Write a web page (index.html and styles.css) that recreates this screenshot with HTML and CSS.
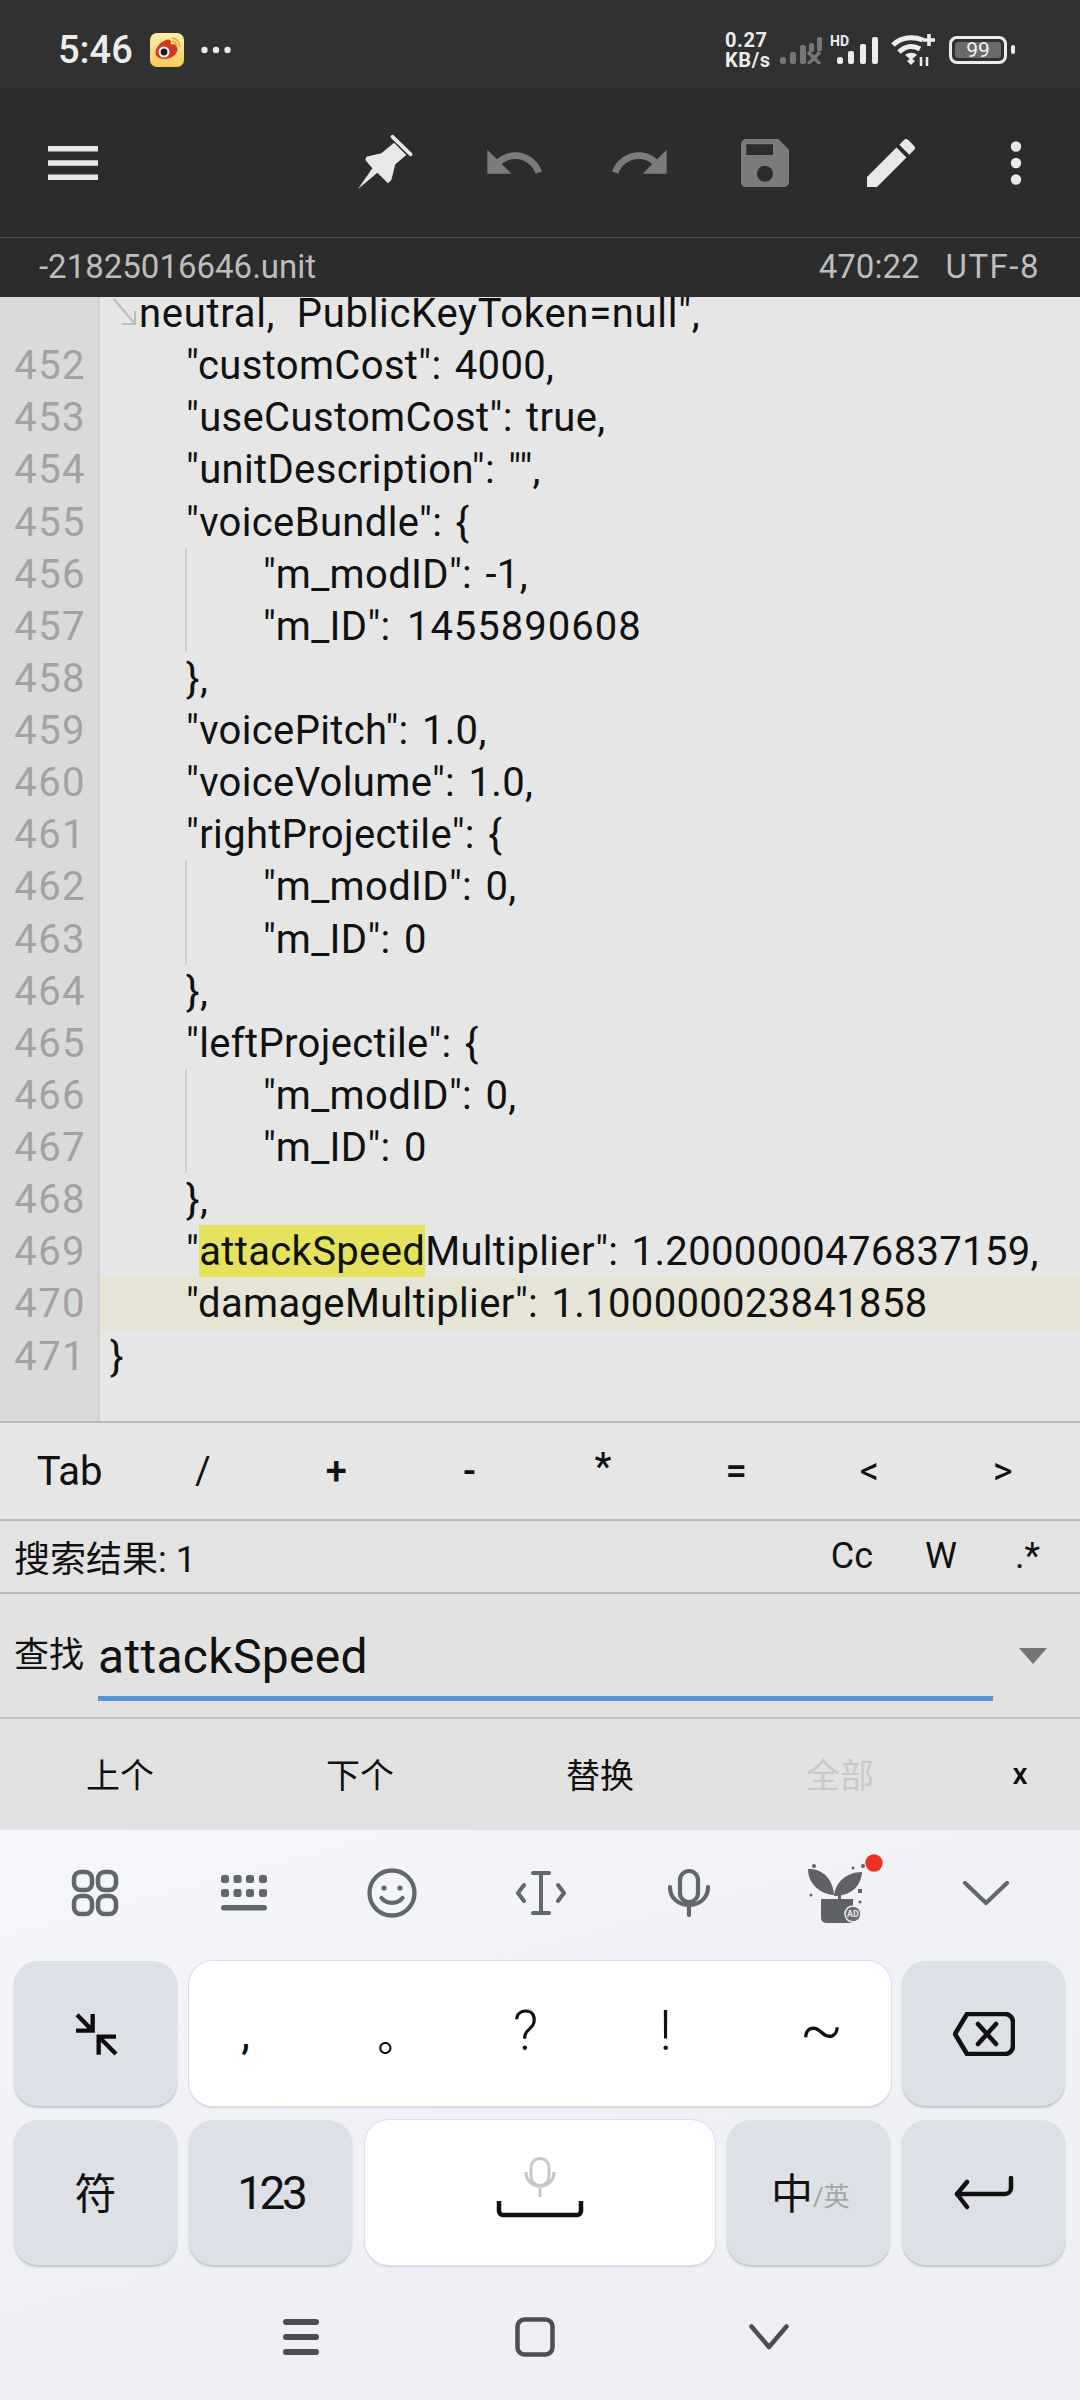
FILE: index.html
```html
<!DOCTYPE html>
<html lang="zh">
<head>
<meta charset="utf-8">
<title>Editor</title>
<link rel="stylesheet" href="styles.css">
</head>
<body>
<div class="phone">
  <header class="status">
    <div class="status-left">
      <span class="time">5:46</span>
      <svg class="weibo" width="34" height="34" viewBox="0 0 34 34">
        <defs><linearGradient id="wb" x1="0" y1="0" x2="0" y2="1"><stop offset="0" stop-color="#fdeeb0"/><stop offset="1" stop-color="#f5cc58"/></linearGradient></defs>
        <rect width="34" height="34" rx="7" fill="url(#wb)"/>
        <path d="M5.500 20c0-6 6-12 12-13.500 3.500-.8 4 2.500 3 5 4-1 7 0 7 4 0 6-6 10.500-13 10.500-5.500 0-9-3-9-6z" fill="#d5361c"/>
        <circle cx="14" cy="19" r="5.500" fill="#fff"/>
        <circle cx="14" cy="19" r="3.400" fill="#1b1b1b"/>
        <path d="M22 8a5 5 0 0 1 4.500 6M22 5a8 8 0 0 1 7.500 8.500" fill="none" stroke="#eda23a" stroke-width="1.500"/>
      </svg>
      <svg class="dots" width="30" height="8" viewBox="0 0 30 8"><circle cx="3.500" cy="4" r="3.200"/><circle cx="15" cy="4" r="3.200"/><circle cx="26.500" cy="4" r="3.200"/></svg>
    </div>
    <div class="status-right">
      <div class="speed"><span>0.27</span><span>KB/s</span></div>
      <svg class="sig1" width="42" height="27" viewBox="0 0 42 27">
        <g fill="#767676"><rect x="0" y="20" width="6" height="7" rx="2.500"/><rect x="10" y="15" width="6" height="12" rx="2"/><rect x="20" y="8" width="6" height="19" rx="2"/><rect x="29" y="6" width="5" height="9" rx="1.500"/><rect x="37" y="0" width="5" height="14" rx="1.500"/></g>
        <path d="M28 15l12 12M40 15L28 27" stroke="#767676" stroke-width="3.500"/>
      </svg>
      <div class="sig2">
        <span class="hd">HD</span>
        <svg width="41" height="27" viewBox="0 0 41 27"><g fill="#ececec"><rect x="0" y="20" width="6" height="7" rx="2.500"/><rect x="11" y="14" width="6" height="13" rx="2"/><rect x="23" y="7" width="6" height="20" rx="2"/><rect x="35" y="0" width="6" height="27" rx="2"/></g></svg>
      </div>
      <svg class="wifi" width="46" height="34" viewBox="0 0 46 34">
        <g fill="none" stroke="#ececec" stroke-width="5"><path d="M2 12C10 4 22 3 32 7"/><path d="M8 19c6-6 14-7 21-3"/></g>
        <path d="M14 23c4-3 9-3 12 0l-6 5z" fill="#ececec" transform="translate(0 -1)"/>
        <path d="M16 28l4-3 4 3-4 4z" fill="#ececec"/>
        <path d="M38 1v12M32 7h12" stroke="#ececec" stroke-width="3.600"/>
        <path d="M30 24v9M36 24v9" stroke="#ececec" stroke-width="2.600"/>
      </svg>
      <div class="battery"><div class="cell"><span>99</span></div><i class="nub"></i></div>
    </div>
  </header>

  <div class="toolbar">
    <div class="tb-cell">
      <svg width="50" height="34" viewBox="0 0 50 34"><path d="M0 0h50v5.500H0zM0 14.200h50v5.500H0zM0 28.500h50V34H0z" fill="#e8e8e8"/></svg>
    </div>
    <div class="tb-group">
      <div class="tb-cell">
        <svg class="pin" width="100" height="75" viewBox="0 0 300 225" fill="#e8e8e8">
          <path d="M163 35l55 53" stroke="#e8e8e8" stroke-width="11" stroke-linecap="round"/>
          <path d="M168 53l37 37-33 28-12 47-10 10-32-32-58 49 43-62-21-25 3-10 45-10z"/>
        </svg>
      </div>
      <div class="tb-cell"><svg width="64" height="64" viewBox="0 0 24 24" fill="#7b7b7b"><path d="M12.500 8c-2.650 0-5.050.99-6.900 2.600L2 7v9h9l-3.620-3.620c1.390-1.160 3.160-1.880 5.120-1.880 3.540 0 6.550 2.310 7.600 5.500l2.370-.78C21.080 11.030 17.150 8 12.500 8z"/></svg></div>
      <div class="tb-cell"><svg width="64" height="64" viewBox="0 0 24 24" fill="#7b7b7b"><path d="M18.400 10.600C16.550 8.990 14.150 8 11.500 8c-4.650 0-8.580 3.030-9.960 7.220L3.900 16c1.050-3.190 4.050-5.500 7.600-5.500 1.950 0 3.730.72 5.120 1.880L13 16h9V7l-3.600 3.600z"/></svg></div>
      <div class="tb-cell"><svg width="64" height="64" viewBox="0 0 24 24" fill="#7b7b7b"><path d="M17 3H5c-1.110 0-2 .9-2 2v14c0 1.100.89 2 2 2h14c1.100 0 2-.9 2-2V7l-4-4zm-5 16c-1.660 0-3-1.340-3-3s1.340-3 3-3 3 1.340 3 3-1.340 3-3 3zm3-10H5V5h10v4z"/></svg></div>
      <div class="tb-cell"><svg width="64" height="64" viewBox="0 0 24 24" fill="#e8e8e8"><path d="M3 17.250V21h3.750L17.810 9.940l-3.750-3.750L3 17.250zM20.710 7.040c.39-.39.39-1.020 0-1.410l-2.340-2.340c-.39-.39-1.020-.39-1.410 0l-1.830 1.830 3.750 3.750 1.830-1.830z"/></svg></div>
      <div class="tb-cell"><svg width="12" height="44" viewBox="0 0 12 44" fill="#e8e8e8"><circle cx="6" cy="5.500" r="5.200"/><circle cx="6" cy="22" r="5.200"/><circle cx="6" cy="38.500" r="5.200"/></svg></div>
    </div>
  </div>

  <div class="filebar">
    <span>-21825016646.unit</span>
    <span class="fileinfo"><span>470:22</span><span class="encoding">UTF-8</span></span>
  </div>

  <main class="editor">
    <div class="lines">
      <div class="row"><div class="num"></div><div class="code wrap"><svg class="wrap-arrow" width="26" height="30" viewBox="0 0 26 30"><path d="M2 2l21 25M23 14v13H10" fill="none" stroke="#bdbdbd" stroke-width="2"/></svg>neutral, PublicKeyToken=null",</div></div>
      <div class="row"><div class="num">452</div><div class="code i1">"customCost": 4000,</div></div>
      <div class="row"><div class="num">453</div><div class="code i1">"useCustomCost": true,</div></div>
      <div class="row"><div class="num">454</div><div class="code i1">"unitDescription": "",</div></div>
      <div class="row"><div class="num">455</div><div class="code i1">"voiceBundle": {</div></div>
      <div class="row"><div class="num">456</div><div class="code i2">"m_modID": -1,</div></div>
      <div class="row"><div class="num">457</div><div class="code i2">"m_ID": <span class="digits">1455890608</span></div></div>
      <div class="row"><div class="num">458</div><div class="code i1">},</div></div>
      <div class="row"><div class="num">459</div><div class="code i1">"voicePitch": 1.0,</div></div>
      <div class="row"><div class="num">460</div><div class="code i1">"voiceVolume": 1.0,</div></div>
      <div class="row"><div class="num">461</div><div class="code i1">"rightProjectile": {</div></div>
      <div class="row"><div class="num">462</div><div class="code i2">"m_modID": 0,</div></div>
      <div class="row"><div class="num">463</div><div class="code i2">"m_ID": 0</div></div>
      <div class="row"><div class="num">464</div><div class="code i1">},</div></div>
      <div class="row"><div class="num">465</div><div class="code i1">"leftProjectile": {</div></div>
      <div class="row"><div class="num">466</div><div class="code i2">"m_modID": 0,</div></div>
      <div class="row"><div class="num">467</div><div class="code i2">"m_ID": 0</div></div>
      <div class="row"><div class="num">468</div><div class="code i1">},</div></div>
      <div class="row"><div class="num">469</div><div class="code i1">"<span class="match">attackSpeed</span>Multiplier": 1.2000000476837159,</div></div>
      <div class="row current"><div class="num">470</div><div class="code i1">"damageMultiplier": 1.100000023841858</div></div>
      <div class="row"><div class="num">471</div><div class="code i0">}</div></div>
      <div class="row fill"><div class="num"></div><div class="code"></div></div>
    </div>
  </main>

  <div class="symbols">
    <span class="tab">Tab</span><span>/</span><span class="b">+</span><span class="b">-</span><span class="b star">*</span><span class="b">=</span><span>&lt;</span><span>&gt;</span>
  </div>

  <div class="results">
    <span class="count">搜索结果: 1</span>
    <span class="opts"><span>Cc</span><span>W</span><span class="regex">.*</span></span>
  </div>

  <div class="find">
    <span class="find-label">查找</span>
    <div class="find-input">attackSpeed</div>
    <i class="caret"></i>
  </div>

  <div class="actions">
    <span>上个</span><span>下个</span><span>替换</span><span class="off">全部</span><span class="close">x</span>
  </div>

  <section class="keyboard">
    <div class="kb-tools">
      <div class="kb-tool"><svg width="48" height="48" viewBox="0 0 48 48" fill="none" stroke="#63666c" stroke-width="4.500"><rect x="3" y="3" width="18" height="18" rx="6.500"/><rect x="27" y="3" width="18" height="18" rx="6.500"/><rect x="3" y="27" width="18" height="18" rx="6.500"/><rect x="27" y="27" width="18" height="18" rx="6.500"/></svg></div>
      <div class="kb-tool"><svg width="46" height="36" viewBox="0 0 46 36" fill="#63666c"><rect x="0" y="0" width="8" height="8" rx="2.500"/><rect x="12.500" y="0" width="8" height="8" rx="2.500"/><rect x="25" y="0" width="8" height="8" rx="2.500"/><rect x="38" y="0" width="8" height="8" rx="2.500"/><rect x="0" y="14" width="8" height="8" rx="2.500"/><rect x="12.500" y="14" width="8" height="8" rx="2.500"/><rect x="25" y="14" width="8" height="8" rx="2.500"/><rect x="38" y="14" width="8" height="8" rx="2.500"/><rect x="0" y="30" width="46" height="5.500" rx="2.700"/></svg></div>
      <div class="kb-tool"><svg width="50" height="50" viewBox="0 0 50 50" fill="none" stroke="#63666c" stroke-width="4.300"><circle cx="25" cy="25" r="22.500"/><path d="M14.500 30c5 6.500 16 6.500 21 0" stroke-linecap="round"/><circle cx="17" cy="20" r="2.600" fill="#63666c" stroke="none"/><circle cx="33" cy="20" r="2.600" fill="#63666c" stroke="none"/></svg></div>
      <div class="kb-tool"><svg width="50" height="44" viewBox="0 0 50 44" fill="none" stroke="#63666c" stroke-width="4" stroke-linecap="round"><path d="M25 2v40M17 2h16M17 42h16" /><path d="M8 14l-6 8 6 8M42 14l6 8-6 8" stroke-linejoin="round"/></svg></div>
      <div class="kb-tool"><svg width="42" height="48" viewBox="0 0 42 48" fill="none" stroke="#63666c" stroke-width="4.200" stroke-linecap="round"><rect x="12" y="2" width="18" height="31" rx="9"/><path d="M2 18c0 24 38 24 38 0M21 38v8"/></svg></div>
      <div class="kb-tool"><svg class="plant" width="80" height="70" viewBox="0 0 80 70" fill="#5f6165">
        <path d="M10 11c13-1 25 9 26 26C22 36 10 26 10 11z"/>
        <path d="M64 14c-1 15-12 24-28 24 1-13 12-24 28-24z"/>
        <path d="M40 36h3v6h-3z"/>
        <path d="M23 41h32v21a3 3 0 0 1-3 3H28a5 5 0 0 1-5-5z"/>
        <circle cx="55" cy="56" r="8" fill="#6b6d71" stroke="#f2f4f8" stroke-width="1.500"/>
        <text x="55" y="59" class="ad">AD</text>
        <circle cx="16" cy="8" r="2"/><circle cx="55" cy="10" r="1.500"/><circle cx="65" cy="8" r="2"/><circle cx="13" cy="37" r="1.500"/><rect x="60" y="31" width="4" height="4"/><circle cx="62" cy="44" r="1.500"/>
        <circle cx="76" cy="5" r="8.700" fill="#ee3024"/>
      </svg></div>
      <div class="kb-tool"><svg width="46" height="24" viewBox="0 0 46 24" fill="none" stroke="#63666c" stroke-width="4.200" stroke-linecap="round" stroke-linejoin="round"><path d="M2 2l21 20L44 2"/></svg></div>
    </div>

    <div class="kb-row">
      <button class="key fn"><svg width="60" height="80" viewBox="15 10 180 240" fill="none" stroke="#0c0c0c" stroke-width="13"><path d="M48 72l47 48M95 70v50H45"/><path d="M165 190l-50-50M113 192v-54h52"/></svg></button>
      <button class="key white punct"><span>,</span><span class="ring">。</span><span class="q">?</span><span class="q">!</span><span class="tilde">~</span></button>
      <button class="key fn"><svg width="62" height="44" viewBox="0 0 62 44" fill="none" stroke="#111" stroke-width="4.600" stroke-linejoin="round"><path d="M14 2h38a8 8 0 0 1 8 8v24a8 8 0 0 1-8 8H14L2 22z"/><path d="M25 12l18 20M43 12L25 32" stroke-linecap="round"/></svg></button>
    </div>

    <div class="kb-row">
      <button class="key fn"><span class="cjk-key">符</span></button>
      <button class="key fn"><span class="num-key">123</span></button>
      <button class="key white space">
        <svg class="space-icon" width="88" height="62" viewBox="0 0 88 62" fill="none"><g stroke="#c7c7c7" stroke-width="3"><rect x="35" y="1.500" width="18" height="27" rx="9"/><path d="M30 15c0 19 28 19 28 0M44 31v9"/></g><path d="M3 44v10a4 4 0 0 0 4 4h74a4 4 0 0 0 4-4V44" stroke="#111" stroke-width="4.500"/></svg>
      </button>
      <button class="key fn lang"><span class="zh">中</span><span class="en">/英</span></button>
      <button class="key fn"><svg width="60" height="34" viewBox="0 0 60 34" fill="none" stroke="#111" stroke-width="4.500" stroke-linecap="round" stroke-linejoin="round"><path d="M57 2v10a6 6 0 0 1-6 6H3"/><path d="M13 6L3 18l10 13"/></svg></button>
    </div>

    <nav class="navbar">
      <div class="nav-cell"><svg width="36" height="36" viewBox="0 0 36 36" fill="#4c4e52"><rect y="0" width="36" height="6" rx="3"/><rect y="15" width="36" height="6" rx="3"/><rect y="30" width="36" height="6" rx="3"/></svg></div>
      <div class="nav-cell"><svg width="40" height="40" viewBox="0 0 40 40" fill="none" stroke="#4c4e52" stroke-width="4.500"><rect x="2.500" y="2.500" width="35" height="35" rx="7"/></svg></div>
      <div class="nav-cell"><svg width="40" height="26" viewBox="0 0 40 26" fill="none" stroke="#4c4e52" stroke-width="4.500" stroke-linecap="round" stroke-linejoin="round"><path d="M2.500 2.500L20 23 37.500 2.500"/></svg></div>
    </nav>
  </section>
</div>
</body>
</html>
```

FILE: styles.css
```css
* { box-sizing: border-box; }
html, body { margin: 0; padding: 0; }
body { width: 1080px; height: 2400px; overflow: hidden; background: #e6e6e6; font-family: Roboto, "Noto Sans CJK SC", sans-serif; color: #111; }
.phone { width: 1080px; height: 2400px; display: flex; flex-direction: column; }
svg { display: block; }

.status { height: 88px; background: #313131; display: flex; justify-content: space-between; align-items: center; padding: 12px 73px 0 58px; color: #ececec; }
.status-left { display: flex; align-items: center; }
.time { font-size: 38px; font-weight: 500; width: 92px; }
.weibo { margin-right: 17px; }
.dots { fill: #ececec; }
.status-right { display: flex; align-items: center; }
.speed { display: flex; flex-direction: column; font-size: 20px; letter-spacing: .6px; font-weight: 700; line-height: 20px; width: 55px; }
.sig1 { margin-right: 9px; }
.sig2 { position: relative; width: 41px; margin-left: 6px; margin-right: 13px; }
.hd { position: absolute; left: -7px; top: -3px; font-size: 14px; font-weight: 700; line-height: 14px; }
.wifi { margin-right: 12px; }
.battery { position: relative; width: 58px; height: 28px; border: 3px solid #ececec; border-radius: 8px; padding: 3px; }
.cell { height: 100%; background: #6a6a6a; border-radius: 3px; display: flex; align-items: center; justify-content: center; font-size: 21px; color: #f0f0f0; line-height: 1; }
.nub { position: absolute; right: -11px; top: 6px; width: 4px; height: 9px; background: #ececec; border-radius: 2px; }

.toolbar { height: 149px; background: #2c2c2c; display: flex; justify-content: space-between; align-items: center; padding-left: 10px; padding-right: 1px; }
.tb-group { display: flex; }
.tb-cell { width: 125.500px; height: 100px; display: flex; align-items: center; justify-content: center; }
.pin { margin-left: -2px; }

.filebar { height: 60px; background: #2c2c2c; border-top: 1px solid #4d4d4d; display: flex; justify-content: space-between; align-items: center; padding: 0 40px 2px 39px; font-size: 33px; color: #bdbdbd; }
.fileinfo { display: flex; gap: 26px; }
.encoding { letter-spacing: 1.500px; }

.editor { height: 1126px; overflow: hidden; background: #e6e6e6; border-bottom: 2px solid #b9b9b9; }
.lines { margin-top: -10px; height: 1136px; display: flex; flex-direction: column; }
.row { height: 52.130px; flex: none; display: flex; font-size: 40px; line-height: 54px; }
.row.fill { flex: 1; }
.num { width: 100px; flex: none; background: #dadada; border-right: 2px solid #d2d2d2; color: #a2a2a2; text-align: right; padding-right: 12px; letter-spacing: 1.400px; }
.code { flex: 1; position: relative; white-space: pre; word-spacing: 3px; letter-spacing: .35px; }
.current .code { background: #e6e5d5; }
.i0 { padding-left: 10px; }
.i1 { padding-left: 86px; }
.i2 { padding-left: 163px; }
.i2::before { content: ""; position: absolute; left: 85px; top: 0; bottom: 0; width: 2px; background: #cecece; }
.wrap { padding-left: 39px; word-spacing: 11px; letter-spacing: .7px; }
.wrap-arrow { position: absolute; left: 12px; top: 10px; }
.match { background: #e5e35d; display: inline-block; height: 52px; }
.digits { letter-spacing: 1px; margin-left: 3px; }

.symbols { height: 98px; flex: none; display: grid; grid-template-columns: repeat(8, 133.300px); padding-left: 3px; align-items: center; justify-items: center; background: #e6e6e6; border-bottom: 2px solid #b9b9b9; font-size: 38px; }
.symbols .tab { font-size: 40px; }
.b { font-weight: 500; }
.star { margin-top: -8px; }

.results { height: 73px; flex: none; display: flex; justify-content: space-between; align-items: center; padding: 0 40px 2px 14px; background: #e3e3e3; border-bottom: 2px solid #b9b9b9; font-size: 36px; }
.opts { display: flex; gap: 52px; }
.regex { margin-left: 6px; }

.find { height: 125px; flex: none; display: flex; align-items: flex-start; background: #e2e2e2; border-bottom: 2px solid #c2c2c2; position: relative; padding-left: 14px; }
.find-label { font-size: 35px; line-height: 52px; margin-top: 36px; width: 84px; }
.find-input { width: 895px; height: 107px; padding-top: 30px; font-size: 48px; letter-spacing: .3px; line-height: 66px; border-bottom: 5px solid #5b94d6; }
.caret { position: absolute; left: 1019px; top: 54px; border-left: 14px solid transparent; border-right: 14px solid transparent; border-top: 16px solid #757575; }

.actions { height: 111px; flex: none; display: grid; grid-template-columns: repeat(4, 240px) 120px; align-items: center; justify-items: center; background: #e2e2e2; font-size: 34px; padding-bottom: 3px; }
.off { color: #c9c9c9; }
.close { font-size: 30px; font-weight: 500; }

.keyboard { flex: 1; background: linear-gradient(165deg, #f5f7fb 0%, #eff1f6 45%, #edeff3 100%); display: flex; flex-direction: column; }
.kb-tools { height: 131px; flex: none; display: flex; padding-left: 21px; padding-bottom: 5px; }
.kb-tool { width: 148.500px; display: flex; align-items: center; justify-content: center; }
.plant { overflow: visible; }
.ad { font-size: 9px; font-weight: 700; text-anchor: middle; fill: #e6e6e6; font-family: Roboto, sans-serif; }

.kb-row { height: 145px; flex: none; display: flex; justify-content: space-between; padding: 0 15px 0 14px; margin-bottom: 14px; }
.key { font-family: inherit; padding: 0; border: 0; width: 163px; height: 145px; border-radius: 24px; display: flex; align-items: center; justify-content: center; color: #111; }
.fn { background: #dde0e7; box-shadow: 0 2px 2px rgba(90, 95, 110, .3); }
.white { background: #fff; box-shadow: 0 0 0 1px #dcdde2, 0 2px 2px rgba(90, 95, 110, .2); }
.punct { width: 702px; justify-content: flex-start; gap: 100px; padding-left: 37px; font-size: 44px; }
.punct span { width: 40px; text-align: center; }
.punct .ring { font-size: 40px; margin-left: 12px; margin-right: -12px; }
.punct .q { font-size: 56px; font-weight: 300; margin-top: -6px; }
.punct .tilde { font-size: 64px; font-weight: 300; margin-left: 14px; margin-top: -8px; }
.space { width: 350px; }
.space-icon { margin-bottom: 10px; }
.cjk-key { font-size: 42px; margin-bottom: 4px; }
.num-key { font-size: 46px; letter-spacing: -3.500px; }
.lang { padding-bottom: 5px; padding-left: 4px; }
.zh { font-size: 42px; }
.en { font-size: 26px; color: #a5a5a5; margin-top: 8px; }

.navbar { flex: 1; display: flex; justify-content: center; padding: 0 10px 0 0; margin-top: -6px; }
.nav-cell { width: 234px; display: flex; align-items: center; justify-content: center; }
```
